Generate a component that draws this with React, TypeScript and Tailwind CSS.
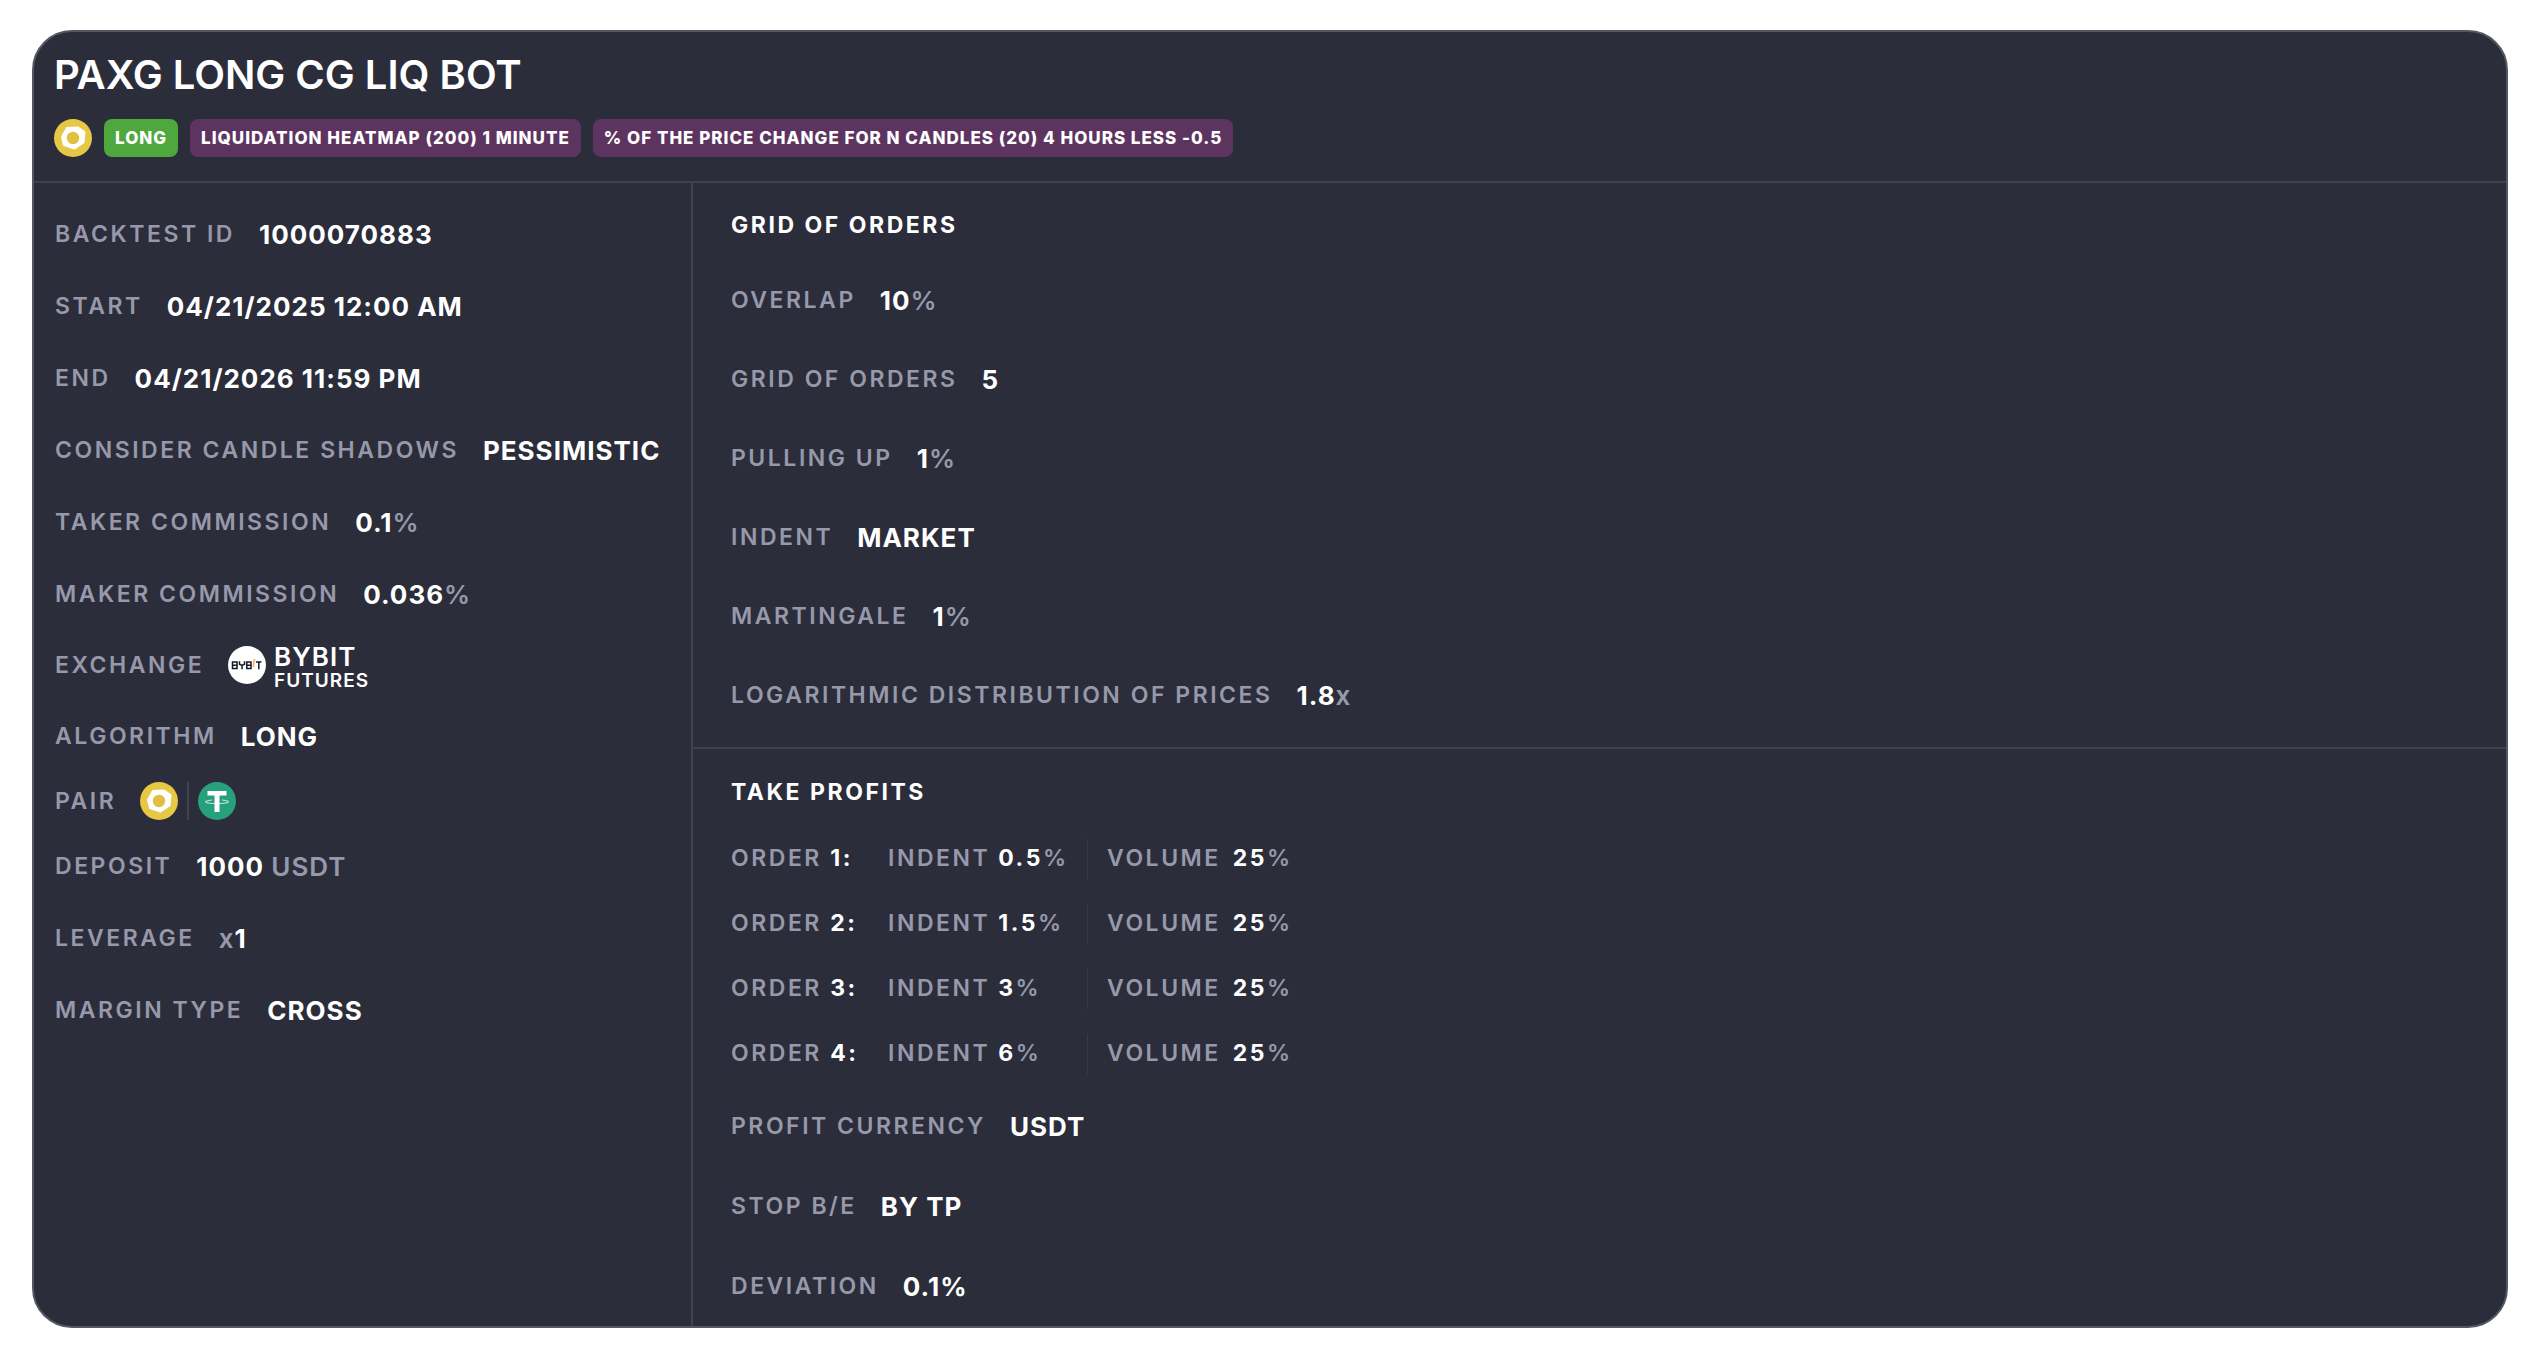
import type { ReactNode } from "react"
import clsx from "clsx"

const orders = [
  { id: 1, indent: "0.5", volume: "25" },
  { id: 2, indent: "1.5", volume: "25" },
  { id: 3, indent: "3", volume: "25" },
  { id: 4, indent: "6", volume: "25" },
]

const tags = [
  { label: "LONG", color: "bg-[#4fa83d]" },
  { label: "LIQUIDATION HEATMAP (200) 1 MINUTE", color: "bg-[#5d345f]" },
  { label: "% OF THE PRICE CHANGE FOR N CANDLES (20) 4 HOURS LESS -0.5", color: "bg-[#5d345f]" },
]

function PaxgIcon() {
  return (
    <svg viewBox="0 0 38 38" className="size-[38px] shrink-0" aria-label="PAXG">
      <circle cx="19" cy="19" r="19" fill="#e6c846" />
      <path
        d="M13 9 L24 8.5 L30.5 13 L29.5 23.5 L20.5 29.5 L10 26 L8 18 Z"
        fill="#fff"
        stroke="#fff"
        strokeWidth="2"
        strokeLinejoin="round"
      />
      <circle cx="19" cy="19" r="6.2" fill="#e0c03f" />
    </svg>
  )
}

function TetherIcon() {
  return (
    <svg viewBox="0 0 38 38" className="size-[38px] shrink-0" aria-label="USDT">
      <circle cx="19" cy="19" r="19" fill="#26a17b" />
      <path d="M9.5 9 H28.5 V13.5 H21.5 V30 H16.5 V13.5 H9.5 Z" fill="#fff" />
      <path
        d="M14 18 C4 19 6 21.5 19 21.5 C32 21.5 34 19 24 18"
        fill="none"
        stroke="#fff"
        strokeOpacity="0.7"
        strokeWidth="1.2"
      />
    </svg>
  )
}

function BybitIcon() {
  return (
    <svg viewBox="0 0 38 38" className="size-[38px] shrink-0" aria-label="Bybit">
      <circle cx="19" cy="19" r="19" fill="#fff" />
      <g fill="none" stroke="#15192a" strokeWidth="1.5">
        <path d="M4.5 16 H9 V22.5 H4.5 Z M4.5 19.2 H9" />
        <path d="M11.5 15.2 V18.2 L14 19.5 L16.5 18.2 V15.2 M14 19.5 V23.3" />
        <path d="M18.8 16 H23 V22.5 H18.8 Z M18.8 19.2 H23" />
        <path d="M28 16 H33.5 M30.8 16 V23.3" />
      </g>
      <path d="M26.5 13 L25.2 21" stroke="#f9b56b" strokeWidth="1.8" />
    </svg>
  )
}

function Unit({ children }: { children: ReactNode }) {
  return <span className="font-semibold text-[#9799ab]">{children}</span>
}

function Row({ label, className, children }: { label: string; className: string; children: ReactNode }) {
  return (
    <div className={clsx("flex items-center gap-6", className)}>
      <dt className="text-[23px] font-semibold tracking-[0.11em] text-[#9799ab]">{label}</dt>
      <dd className="flex items-center whitespace-pre text-[26px] font-bold tracking-[1px]">{children}</dd>
    </div>
  )
}

function Heading({ children }: { children: ReactNode }) {
  return <h2 className="text-[23px] leading-[35px] font-bold tracking-[0.11em]">{children}</h2>
}

export default function App() {
  return (
    <main className="bg-white px-[30px] pt-[30px] pb-7 pl-8 font-['Inter',sans-serif] text-white">
      <article className="rounded-[40px] border-2 border-[#555762] bg-[#2b2d3a]">
        <header className="border-b-2 border-[#40424e] px-5 pt-[18px] pb-6">
          <h1 className="text-[40px] leading-[50px] font-semibold">PAXG LONG CG LIQ BOT</h1>
          <div className="mt-[19px] flex items-center gap-3">
            <PaxgIcon />
            {tags.map((tag) => (
              <span
                key={tag.label}
                className={clsx(
                  "rounded-lg px-[11px] text-[17px] leading-[38px] font-extrabold tracking-[1px]",
                  tag.color,
                )}
              >
                {tag.label}
              </span>
            ))}
          </div>
        </header>

        <div className="grid grid-cols-[659px_1fr]">
          <dl className="border-r-2 border-[#40424e] px-[21px] pt-[15px]">
            <Row label="BACKTEST ID" className="h-18">1000070883</Row>
            <Row label="START" className="h-18">04/21/2025 12:00 AM</Row>
            <Row label="END" className="h-18">04/21/2026 11:59 PM</Row>
            <Row label="CONSIDER CANDLE SHADOWS" className="h-18">PESSIMISTIC</Row>
            <Row label="TAKER COMMISSION" className="h-18">
              0.1<Unit>%</Unit>
            </Row>
            <Row label="MAKER COMMISSION" className="h-18">
              0.036<Unit>%</Unit>
            </Row>
            <Row label="EXCHANGE" className="h-[70px]">
              <BybitIcon />
              <span className="ml-2 flex flex-col pt-1 font-semibold">
                <span className="text-[26px] leading-7">BYBIT</span>
                <span className="text-[19px] leading-5">FUTURES</span>
              </span>
            </Row>
            <Row label="ALGORITHM" className="h-18">LONG</Row>
            <Row label="PAIR" className="h-[58px]">
              <PaxgIcon />
              <span className="mx-[9px] h-[38px] w-[2px] bg-[#40424e]" />
              <TetherIcon />
            </Row>
            <Row label="DEPOSIT" className="h-18">
              1000 <Unit>USDT</Unit>
            </Row>
            <Row label="LEVERAGE" className="h-18">
              <Unit>x</Unit>1
            </Row>
            <Row label="MARGIN TYPE" className="h-18">CROSS</Row>
          </dl>

          <div>
            <section className="border-b-2 border-[#40424e] px-[38px] pt-[25px] pb-3">
              <Heading>GRID OF ORDERS</Heading>
              <dl className="mt-[18px]">
                <Row label="OVERLAP" className="h-[79px]">
                  10<Unit>%</Unit>
                </Row>
                <Row label="GRID OF ORDERS" className="h-[79px]">5</Row>
                <Row label="PULLING UP" className="h-[79px]">
                  1<Unit>%</Unit>
                </Row>
                <Row label="INDENT" className="h-[79px]">MARKET</Row>
                <Row label="MARTINGALE" className="h-[79px]">
                  1<Unit>%</Unit>
                </Row>
                <Row label="LOGARITHMIC DISTRIBUTION OF PRICES" className="h-[79px]">
                  1.8<Unit>x</Unit>
                </Row>
              </dl>
            </section>

            <section className="px-[38px] pt-[26px]">
              <Heading>TAKE PROFITS</Heading>
              <table className="mt-4 text-[23px] font-semibold tracking-[0.11em] text-[#9799ab]">
                <tbody>
                  {orders.map((order) => (
                    <tr key={order.id} className="h-[65px]">
                      <th scope="row" className="w-[157px] text-left font-semibold">
                        ORDER <b className="font-bold text-white">{order.id}:</b>
                      </th>
                      <td>
                        <div className="flex h-10 w-[200px] items-center border-r border-[#363946]">
                          <span className="mr-2">INDENT</span>
                          <b className="font-bold text-white">{order.indent}</b>%
                        </div>
                      </td>
                      <td className="pl-[19px]">
                        <span className="mr-3">VOLUME</span>
                        <b className="font-bold text-white">{order.volume}</b>%
                      </td>
                    </tr>
                  ))}
                </tbody>
              </table>
              <dl>
                <Row label="PROFIT CURRENCY" className="h-20">USDT</Row>
                <Row label="STOP B/E" className="h-20">BY TP</Row>
                <Row label="DEVIATION" className="h-20">0.1%</Row>
              </dl>
            </section>
          </div>
        </div>
      </article>
    </main>
  )
}
